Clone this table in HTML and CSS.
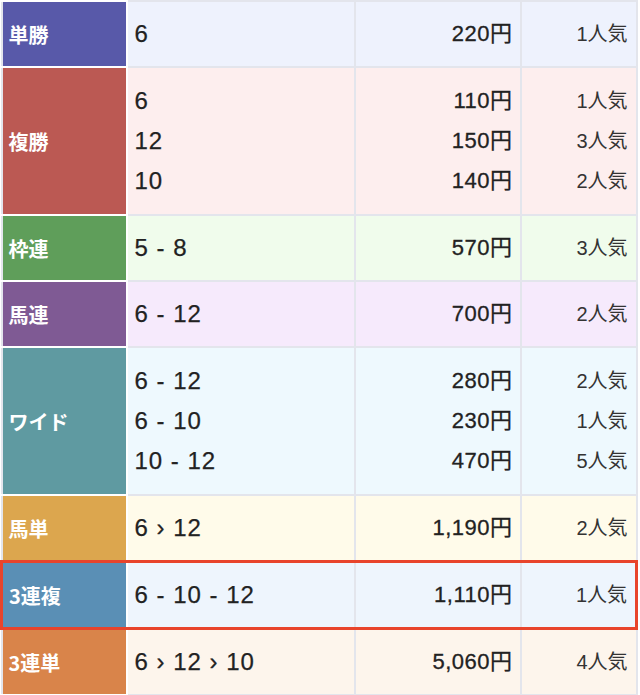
FILE: index.html
```html
<!DOCTYPE html>
<html lang="ja">
<head>
	<meta charset="UTF-8">
	<title>払戻金</title>
	<link rel="stylesheet" href="styles.css">
</head>
<body>
	<table class="payout">
		<tr class="tansho">
			<th>単勝</th>
			<td class="num">6</td>
			<td class="yen">220円</td>
			<td class="pop">1人気</td>
		</tr>
		<tr class="fukusho multi">
			<th>複勝</th>
			<td class="num"><div>6</div><div>12</div><div>10</div></td>
			<td class="yen"><div>110円</div><div>150円</div><div>140円</div></td>
			<td class="pop"><div>1人気</div><div>3人気</div><div>2人気</div></td>
		</tr>
		<tr class="wakuren">
			<th>枠連</th>
			<td class="num">5 - 8</td>
			<td class="yen">570円</td>
			<td class="pop">3人気</td>
		</tr>
		<tr class="umaren">
			<th>馬連</th>
			<td class="num">6 - 12</td>
			<td class="yen">700円</td>
			<td class="pop">2人気</td>
		</tr>
		<tr class="wide multi">
			<th>ワイド</th>
			<td class="num"><div>6 - 12</div><div>6 - 10</div><div>10 - 12</div></td>
			<td class="yen"><div>280円</div><div>230円</div><div>470円</div></td>
			<td class="pop"><div>2人気</div><div>1人気</div><div>5人気</div></td>
		</tr>
		<tr class="umatan">
			<th>馬単</th>
			<td class="num">6 › 12</td>
			<td class="yen">1,190円</td>
			<td class="pop">2人気</td>
		</tr>
		<tr class="sanrenpuku hit">
			<th>3連複</th>
			<td class="num">6 - 10 - 12</td>
			<td class="yen">1,110円</td>
			<td class="pop">1人気</td>
		</tr>
		<tr class="sanrentan">
			<th>3連単</th>
			<td class="num">6 › 12 › 10</td>
			<td class="yen">5,060円</td>
			<td class="pop">4人気</td>
		</tr>
	</table>
</body>
</html>
```
FILE: styles.css
```css
body {
	background: #fff;
	margin: 0px;
	font-family: "Liberation Sans", "Noto Sans CJK JP", sans-serif;
	color: #222;
}
table.payout {
	border-collapse: collapse;
	width: 638px;
	margin-top: 0px;
	table-layout: fixed;
}
table.payout th,
table.payout td {
	border: 2px solid #e3e5ec;
	padding: 12px 7px;
	line-height: 40px;
	vertical-align: middle;
}
table.payout tr.multi th,
table.payout tr.multi td {
	padding-top: 13px;
	padding-bottom: 13px;
}
table.payout th {
	border-color: #fff;
	border-left-color: #e3e5ec;
	color: #fff;
	font: bold 20px "Noto Sans CJK JP", sans-serif;
	text-align: left;
	width: 110px;
	padding-left: 6px;
}
table.payout td.num {
	font-size: 24px;
	letter-spacing: 1px;
	width: 212px;
	-webkit-text-stroke: 0.25px #222;
}
table.payout td.yen {
	font-size: 22px;
	letter-spacing: 0.5px;
	text-align: right;
	width: 150px;
	-webkit-text-stroke: 0.3px #222;
}
table.payout td.pop {
	color: #333;
	font-size: 20px;
	text-align: right;
	padding-right: 8px;
}

/* colors */
tr.tansho th     { background: #5859a9; }
tr.tansho td     { background: #eef2fd; }
tr.fukusho th    { background: #bb5953; }
tr.fukusho td    { background: #fdeeee; }
tr.wakuren th    { background: #5f9e5a; }
tr.wakuren td    { background: #f0fcec; }
tr.umaren th     { background: #7f5a94; }
tr.umaren td     { background: #f6eafc; }
tr.wide th       { background: #5f9aa1; }
tr.wide td       { background: #eef9fe; }
tr.umatan th     { background: #dca64e; }
tr.umatan td     { background: #fffbea; }
tr.sanrenpuku th { background: #5a8fb5; }
tr.sanrenpuku td { background: #eef5fd; }
tr.sanrentan th  { background: #d9844a; }
tr.sanrentan td  { background: #fdf5ec; }

/* hit row */
tr.hit th,
tr.hit td {
	border-top: 3px solid #e8442b;
	border-bottom: 3px solid #e8442b;
}
tr.hit th {
	border-left: 3px solid #e8442b;
}
tr.hit td.pop {
	border-right: 3px solid #e8442b;
}
```
